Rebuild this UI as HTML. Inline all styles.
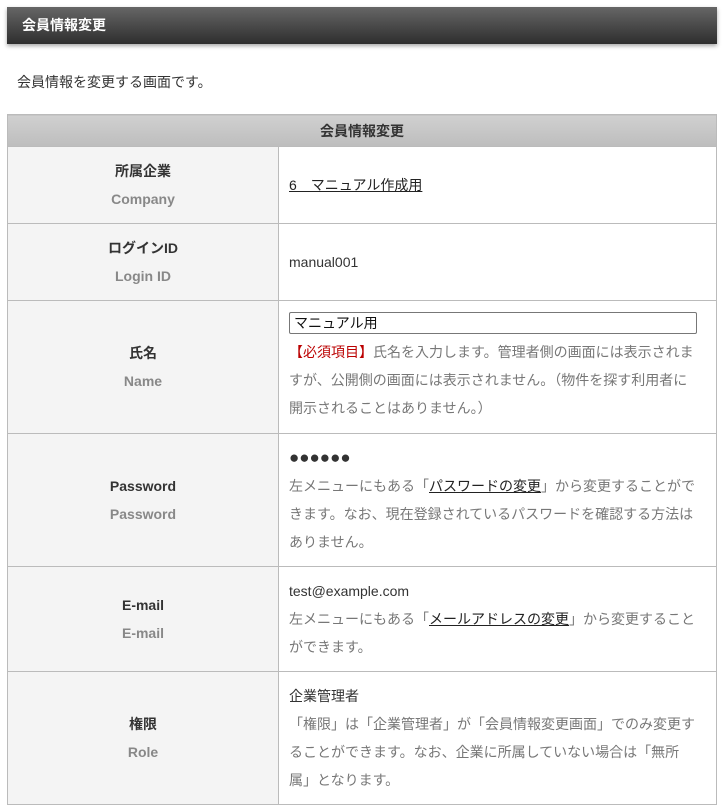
<!DOCTYPE html>
<html><head><meta charset="utf-8"><style>
body{margin:0;background:#fff;font-family:"Liberation Sans","Noto Sans CJK JP",sans-serif;font-size:14px;color:#333;}
.hd{position:absolute;left:7px;top:7px;width:710px;height:37px;background:linear-gradient(#666,#2e2e2e);box-shadow:0 2px 4px rgba(0,0,0,.35);color:#fff;font-weight:bold;font-size:14px;line-height:37px;box-sizing:border-box;padding-left:15px;}
.intro{position:absolute;left:17px;top:72px;line-height:20px;}
table{position:absolute;left:7px;top:114px;width:710px;border-collapse:collapse;}
td,th{border:1px solid #bbb;padding:0;}
th.top{background:linear-gradient(#d0d0d0,#bdbdbd);height:31px;font-weight:bold;font-size:14px;}
td.l{width:270px;background:#f4f4f4;text-align:center;font-weight:bold;line-height:28px;}
td.l span{display:block;color:#888;}
td.r{padding:0 19px 0 10px;line-height:28px;vertical-align:middle;}
.g{color:#777;}
.red{color:#b00;}
a{color:#222;text-decoration:underline;}
.inp{border:1px solid #777;border-radius:2px;height:20px;line-height:20px;padding-left:4px;color:#111;margin-bottom:4px;}
.dots{font-size:17px;letter-spacing:0;color:#333;}
</style></head><body>
<div class="hd">会員情報変更</div>
<div class="intro">会員情報を変更する画面です。</div>
<table>
<tr><th class="top" colspan="2">会員情報変更</th></tr>
<tr style="height:77px"><td class="l">所属企業<span>Company</span></td><td class="r"><a>6　マニュアル作成用</a></td></tr>
<tr style="height:77px"><td class="l">ログインID<span>Login ID</span></td><td class="r">manual001</td></tr>
<tr style="height:133px"><td class="l">氏名<span>Name</span></td><td class="r"><div class="inp">マニュアル用</div><div class="g"><span class="red">【必須項目】</span>氏名を入力します。管理者側の画面には表示されますが、公開側の画面には表示されません。（物件を探す利用者に開示されることはありません。）</div></td></tr>
<tr style="height:133px"><td class="l">Password<span>Password</span></td><td class="r"><div class="dots">●●●●●●</div><div class="g">左メニューにもある「<a>パスワードの変更</a>」から変更することができます。なお、現在登録されているパスワードを確認する方法はありません。</div></td></tr>
<tr style="height:105px"><td class="l">E-mail<span>E-mail</span></td><td class="r"><div>test@example.com</div><div class="g">左メニューにもある「<a>メールアドレスの変更</a>」から変更することができます。</div></td></tr>
<tr style="height:133px"><td class="l">権限<span>Role</span></td><td class="r"><div>企業管理者</div><div class="g">「権限」は「企業管理者」が「会員情報変更画面」でのみ変更することができます。なお、企業に所属していない場合は「無所属」となります。</div></td></tr>
</table>
</body></html>
